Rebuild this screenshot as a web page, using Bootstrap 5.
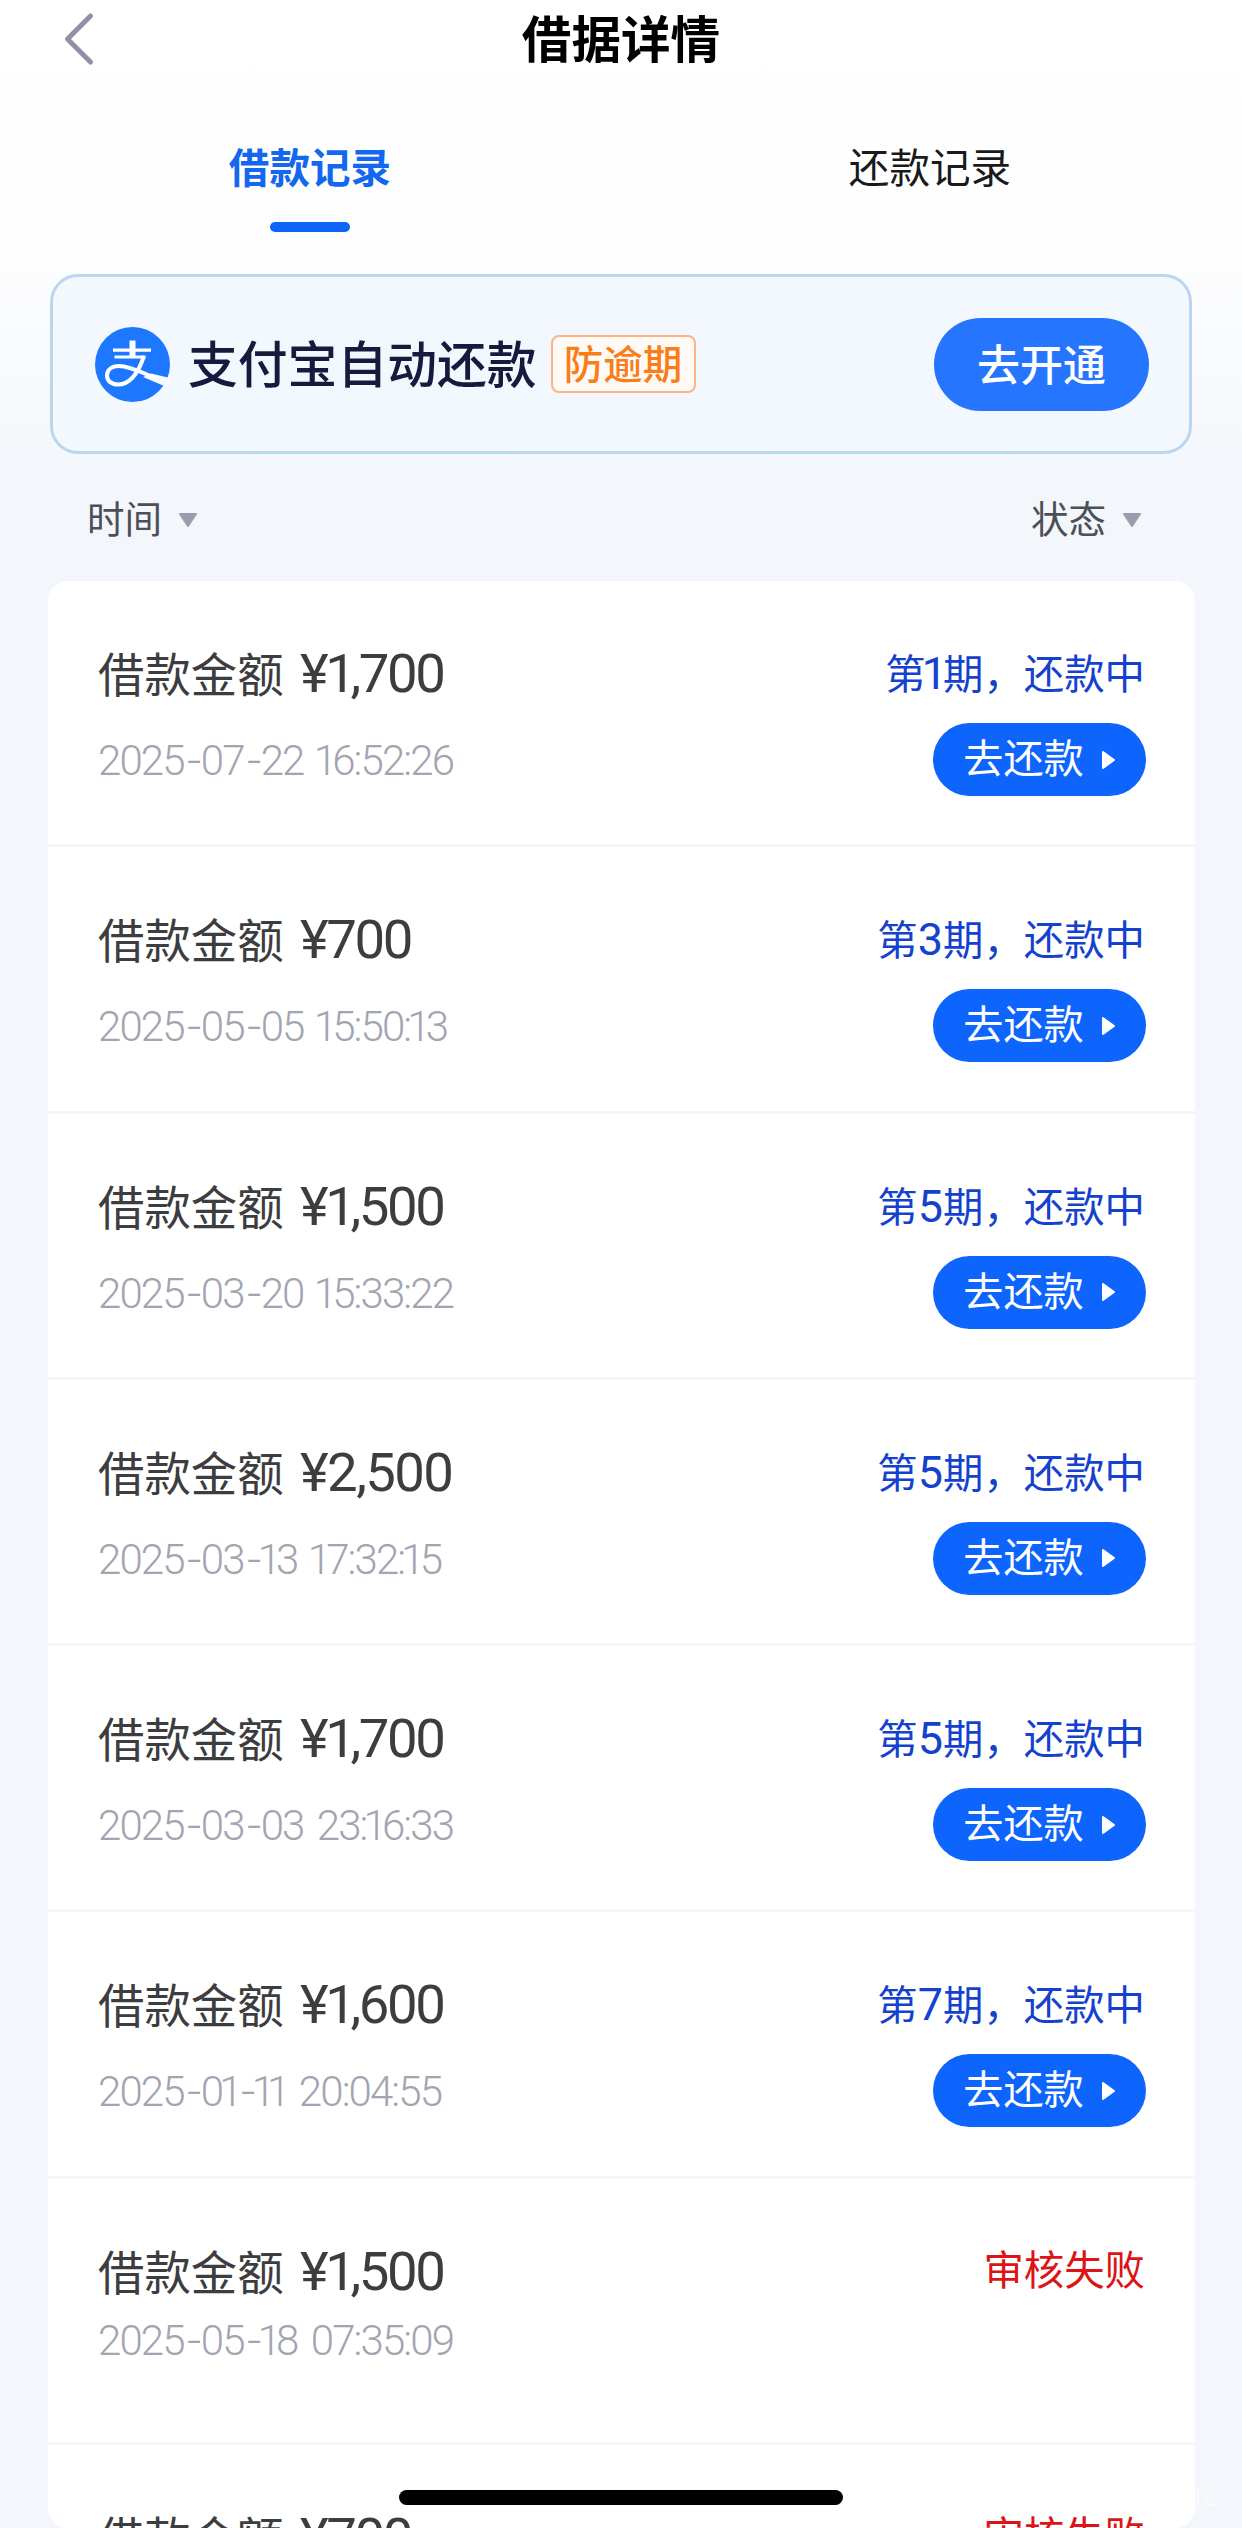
<!DOCTYPE html>
<html lang="zh-CN">
<head>
<meta charset="utf-8">
<meta name="viewport" content="width=device-width, initial-scale=1">
<title>借据详情</title>
<link href="https://cdn.jsdelivr.net/npm/bootstrap@5.3.0/dist/css/bootstrap.min.css" rel="stylesheet">
<style>
body{font-family:Roboto,"Noto Sans CJK SC",sans-serif;background:#f3f6fb;color:#3d3d3f}
.screen{width:1242px;height:2528px;background:linear-gradient(#fff 0,#fefefe 240px,#f3f6fb 480px)}
.topbar{height:60px;padding:11px 0 0 62px}
.topbar h1{font-size:49.6px;line-height:83px;color:#000}
.back{width:34px;height:56px}
.tabs{height:214px;padding-top:78px;padding-right:2px}
.tab-item{font-size:40.6px;line-height:62px;color:#1a1a1c}
.tab-item.active{color:#1467f0}
.tab-bar{width:80px;height:10px;background:#0f64f8;margin-top:22px}
.promo{margin:0 50px;height:180px;border:3px solid #b9d6ee;border-radius:28px;background:#f3f8ff;padding:0 40px 0 42px}
.promo-title{font-size:49.8px;line-height:60px;color:#171a3c;margin-left:18px;padding-top:4px}
.promo-tag{font-size:39.5px;line-height:57px;height:58px;width:145px;border:2px solid #f9b585;border-radius:8px;color:#fa7d18;background:#fffaf6;margin-left:14px}
.btn-open,.btn-open:hover{width:215px;height:93px;font-size:43px;background:#2575ff;color:#fff}
.filters{height:127px;padding:5px 100px 0 87px;font-size:37.5px;color:#4d4f58}
.caret{width:20px;height:16px;margin-left:16px;fill:#9a9cb0;stroke:#9a9cb0;stroke-width:2;stroke-linejoin:round}
.loans{margin:0 47px 0 48px;height:1947px;border-radius:20px;background:#fff}
.loan{height:266.25px;padding:62px 50px 0 50px;border-bottom:3px solid #f4f5f8}
.amount{font-size:46.4px;line-height:60px}
.money{font-size:54.5px;letter-spacing:-2.4px;margin-left:5px}
.money.wide{letter-spacing:-1.6px}
.stamp{font-size:42px;line-height:50px;font-weight:300;letter-spacing:-1.9px;word-spacing:5px;color:#a2a4b1;margin-top:30px}
.failed .stamp{margin-top:12px}
.one{margin:0 -3px}
.money .one{margin:0 -3px 0 -1px}
.dash{display:inline-block;transform:scaleX(1.2);margin:0 3px 0 4px}
.state{font-size:40.4px;line-height:60px;padding-top:1px;color:#1442cf}
.state .num{font-size:45px}
.state .one{margin:0 -4px}
.failed .state{color:#dd1316}
.btn-pay,.btn-pay:hover{width:213px;height:73px;font-size:40.2px;line-height:73px;background:#0d65fe;color:#fff;margin-top:17px;margin-right:-1px}
.play{width:15px;height:20px;margin-left:17px;fill:#fff;stroke:#fff;stroke-width:2;stroke-linejoin:round}
.home-bar{left:399px;top:2490px;width:444px;height:15px;background:#000}
.stampmark{right:21px;top:2484px;font-size:18px;color:#fff;opacity:.65}
</style>
</head>
<body>
<main class="screen position-relative overflow-hidden">
<header class="topbar position-relative">
<svg class="back d-block" viewBox="0 0 34 56" fill="none" stroke="#8f90a3" stroke-width="5" stroke-linecap="round" stroke-linejoin="round"><path d="M28.500 5 5.500 28l23 23"/></svg>
<h1 class="position-absolute start-0 end-0 top-0 text-center fw-bold m-0">借据详情</h1>
</header>
<nav class="tabs d-flex">
<div class="tab-item active w-50 d-flex flex-column align-items-center fw-bold">借款记录<span class="tab-bar rounded-pill"></span></div>
<div class="tab-item w-50 text-center">还款记录</div>
</nav>
<section class="promo d-flex align-items-center">
<svg class="flex-shrink-0" width="75" height="75" viewBox="0 0 75 75"><circle cx="37.500" cy="37.500" r="37.500" fill="#1d78ff"/><path d="M56 46.500 75 51V57L70.500 59.500 48 50Z" fill="#f8fbff"/><path d="M18 23.200h38M19.500 30h31" stroke="#fff" stroke-width="3.200"/><path d="M37.500 13.500V30" stroke="#fff" stroke-width="6"/><path d="M49 29C45 41 38 57.500 23 57.500 16 57.500 12 53.500 12 48.500 12 42.500 17 39 24 39 35 39 48 46 60 51" fill="none" stroke="#fff" stroke-width="4"/></svg>
<span class="promo-title fw-medium">支付宝自动还款</span>
<span class="promo-tag text-center fw-medium">防逾期</span>
<button class="btn btn-open rounded-pill ms-auto p-0 pt-1 fw-medium border-0">去开通</button>
</section>
<div class="filters d-flex justify-content-between">
<span class="d-flex align-items-center">时间<svg class="caret" viewBox="0 0 20 16"><path d="M2 2h16L10 14Z"/></svg></span>
<span class="d-flex align-items-center">状态<svg class="caret" viewBox="0 0 20 16"><path d="M2 2h16L10 14Z"/></svg></span>
</div>
<section class="loans overflow-hidden">
<article class="loan d-flex justify-content-between">
<div><div class="amount">借款金额 <span class="money">¥1,700</span></div><div class="stamp">2025-07-22 16:52:26</div></div>
<div class="d-flex flex-column align-items-end"><div class="state">第<span class="num">1</span>期，还款中</div><button class="btn btn-pay rounded-pill border-0 p-0 d-flex align-items-center justify-content-center">去还款<svg class="play" viewBox="0 0 15 20"><path d="M2 2 13 10 2 18Z"/></svg></button></div>
</article>
<article class="loan d-flex justify-content-between">
<div><div class="amount">借款金额 <span class="money">¥700</span></div><div class="stamp">2025-05-05 15:50:13</div></div>
<div class="d-flex flex-column align-items-end"><div class="state">第<span class="num">3</span>期，还款中</div><button class="btn btn-pay rounded-pill border-0 p-0 d-flex align-items-center justify-content-center">去还款<svg class="play" viewBox="0 0 15 20"><path d="M2 2 13 10 2 18Z"/></svg></button></div>
</article>
<article class="loan d-flex justify-content-between">
<div><div class="amount">借款金额 <span class="money">¥1,500</span></div><div class="stamp">2025-03-20 15:33:22</div></div>
<div class="d-flex flex-column align-items-end"><div class="state">第<span class="num">5</span>期，还款中</div><button class="btn btn-pay rounded-pill border-0 p-0 d-flex align-items-center justify-content-center">去还款<svg class="play" viewBox="0 0 15 20"><path d="M2 2 13 10 2 18Z"/></svg></button></div>
</article>
<article class="loan d-flex justify-content-between">
<div><div class="amount">借款金额 <span class="money wide">¥2,500</span></div><div class="stamp">2025-03-13 17:32:15</div></div>
<div class="d-flex flex-column align-items-end"><div class="state">第<span class="num">5</span>期，还款中</div><button class="btn btn-pay rounded-pill border-0 p-0 d-flex align-items-center justify-content-center">去还款<svg class="play" viewBox="0 0 15 20"><path d="M2 2 13 10 2 18Z"/></svg></button></div>
</article>
<article class="loan d-flex justify-content-between">
<div><div class="amount">借款金额 <span class="money">¥1,700</span></div><div class="stamp">2025-03-03 23:16:33</div></div>
<div class="d-flex flex-column align-items-end"><div class="state">第<span class="num">5</span>期，还款中</div><button class="btn btn-pay rounded-pill border-0 p-0 d-flex align-items-center justify-content-center">去还款<svg class="play" viewBox="0 0 15 20"><path d="M2 2 13 10 2 18Z"/></svg></button></div>
</article>
<article class="loan d-flex justify-content-between">
<div><div class="amount">借款金额 <span class="money">¥1,600</span></div><div class="stamp">2025-01-11 20:04:55</div></div>
<div class="d-flex flex-column align-items-end"><div class="state">第<span class="num">7</span>期，还款中</div><button class="btn btn-pay rounded-pill border-0 p-0 d-flex align-items-center justify-content-center">去还款<svg class="play" viewBox="0 0 15 20"><path d="M2 2 13 10 2 18Z"/></svg></button></div>
</article>
<article class="loan failed d-flex justify-content-between">
<div><div class="amount">借款金额 <span class="money">¥1,500</span></div><div class="stamp">2025-05-18 07:35:09</div></div>
<div class="state">审核失败</div>
</article>
<article class="loan failed d-flex justify-content-between">
<div class="amount">借款金额 <span class="money">¥700</span></div>
<div class="state">审核失败</div>
</article>
</section>
<div class="home-bar rounded-pill position-absolute"></div>
<div class="stampmark position-absolute">社区</div>
</main>
<script src="https://cdn.jsdelivr.net/npm/bootstrap@5.3.0/dist/js/bootstrap.bundle.min.js"></script>
<script>
// Proportional figures: tighten every 1 and widen the date hyphens
document.querySelectorAll('.money, .stamp, .num').forEach(function (el) {
  el.innerHTML = el.textContent
    .replace(/[1-]/g, function (c) { return '<span class="' + (c === '1' ? 'one' : 'dash') + '">' + c + '</span>'; });
});
</script>
</body>
</html>
